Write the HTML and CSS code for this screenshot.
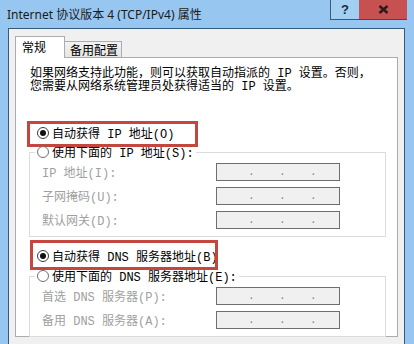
FILE: index.html
```html
<!DOCTYPE html>
<html>
<head>
<meta charset="utf-8">
<link rel="stylesheet" href="styles.css">
</head>
<body>
<div class="titlebar">
  <div class="title">Internet 协议版本 4 (TCP/IPv4) 属性</div>
  <div class="btn help">?</div>
  <div class="btn close"><svg width="11" height="9" viewBox="0 0 11 9"><path d="M1.5 1 L9.5 8 M9.5 1 L1.5 8" stroke="#2a1c1c" stroke-width="2.4" fill="none"/></svg></div>
</div>
<div class="frame">
  <div class="tabs">
    <div class="tab active">常规</div>
    <div class="tab">备用配置</div>
  </div>
  <div class="page">
    <p class="intro">如果网络支持此功能，则可以获取自动指派的 IP 设置。否则，<br>您需要从网络系统管理员处获得适当的 IP 设置。</p>

    <div class="opt first"><span class="radio on"></span>自动获得 IP 地址(O)<span class="mark m1"></span></div>
    <div class="group g1">
      <div class="legend"><span class="radio"></span>使用下面的 IP 地址(S):</div>
      <div class="fields">
        <span class="lbl">IP 地址(I):</span>
        <span class="ipbox"><i class="o"></i><i class="d">.</i><i class="o"></i><i class="d">.</i><i class="o"></i><i class="d">.</i></span>
        <span class="lbl">子网掩码(U):</span>
        <span class="ipbox"><i class="o"></i><i class="d">.</i><i class="o"></i><i class="d">.</i><i class="o"></i><i class="d">.</i></span>
        <span class="lbl">默认网关(D):</span>
        <span class="ipbox"><i class="o"></i><i class="d">.</i><i class="o"></i><i class="d">.</i><i class="o"></i><i class="d">.</i></span>
      </div>
    </div>

    <div class="opt second"><span class="radio on"></span>自动获得 DNS 服务器地址(B)<span class="mark m2"></span></div>
    <div class="group g2">
      <div class="legend"><span class="radio"></span>使用下面的 DNS 服务器地址(E):</div>
      <div class="fields">
        <span class="lbl">首选 DNS 服务器(P):</span>
        <span class="ipbox"><i class="o"></i><i class="d">.</i><i class="o"></i><i class="d">.</i><i class="o"></i><i class="d">.</i></span>
        <span class="lbl">备用 DNS 服务器(A):</span>
        <span class="ipbox"><i class="o"></i><i class="d">.</i><i class="o"></i><i class="d">.</i><i class="o"></i><i class="d">.</i></span>
      </div>
    </div>
  </div>
</div>
</body>
</html>
```

FILE: styles.css
```css
html, body {
  margin: 0;
  padding: 0;
}
body {
  width: 414px;
  height: 344px;
  overflow: hidden;
  background: #97c7f0;
  font-family: "Liberation Mono", "Noto Sans CJK SC", monospace;
  font-size: 12px;
  color: #000;
}

.titlebar {
  display: flex;
  height: 28px;
}
.title {
  flex: 1;
  font-family: "Noto Sans", "Noto Sans CJK SC", sans-serif;
  font-size: 12px;
  line-height: 18px;
  padding: 6px 0 0 7px;
  color: #1b1b1b;
  white-space: nowrap;
}
.btn {
  height: 20px;
  box-sizing: border-box;
  display: flex;
  align-items: center;
  justify-content: center;
}
.help {
  width: 29px;
  border-left: 1px solid #3a5a78;
  border-bottom: 1px solid #3a5a78;
  background: #a3cff2;
  font-family: "Liberation Sans", sans-serif;
  font-weight: bold;
  font-size: 13px;
  color: #1d2b3b;
}
.close {
  width: 48px;
  background: #c75050;
  border-bottom: 1px solid #6a3a3a;
  margin-right: 7px;
}

.frame {
  margin: 0 9px 0 8px;
  height: 316px;
  box-sizing: border-box;
  border: 1px solid #335a7d;
  border-bottom: none;
  background: #f0f0f0;
  padding: 7px 6px 0 6px;
}

.tabs {
  display: flex;
  align-items: flex-start;
  height: 21px;
}
.tab {
  font-family: "Noto Sans CJK SC", sans-serif;
  font-size: 12px;
  box-sizing: border-box;
  color: #000;
}
.tab.active {
  position: relative;
  z-index: 1;
  width: 50px;
  height: 22px;
  background: #fff;
  border: 1px solid #acacac;
  border-bottom: none;
  padding-left: 6px;
  line-height: 20px;
}
.tab:not(.active) {
  margin-top: 5px;
  width: 57px;
  height: 16px;
  background: linear-gradient(#f2f2f2, #e5e5e5);
  border: 1px solid #acacac;
  border-left: none;
  border-bottom: none;
  padding-left: 5px;
  line-height: 15px;
}

.page {
  height: 280px;
  box-sizing: border-box;
  border: 1px solid #acacac;
  background: #fff;
  padding: 10px 11px 0 14px;
}

.intro {
  margin: 0;
  line-height: 13px;
  white-space: nowrap;
}

.opt {
  position: relative;
  display: flex;
  align-items: center;
  height: 18px;
  padding-left: 7px;
  white-space: nowrap;
}
.opt.first { margin-top: 30px; }
.opt.second { margin-top: 10px; }

.radio {
  position: relative;
  width: 12px;
  height: 12px;
  box-sizing: border-box;
  border: 1px solid #3c3c3c;
  border-radius: 50%;
  background: #fff;
  margin-right: 3px;
  flex: none;
}
.radio.on::after {
  content: "";
  position: absolute;
  left: 2px;
  top: 2px;
  width: 6px;
  height: 6px;
  border-radius: 50%;
  background: #111;
}
.legend .radio {
  border-color: #707070;
}

.mark {
  position: absolute;
  box-sizing: border-box;
  border: 3px solid #c4473f;
}
.m1 { left: -3px; top: -3px; width: 171px; height: 26px; }
.m2 { left: 0; top: -7px; width: 188px; height: 30px; }

.group {
  margin-left: -1px;
  border: 1px solid #dcdcdc;
  padding: 0 0 7px 12px;
}
.g1 { margin-top: 10px; }
.g2 { margin-top: 11px; }

.legend {
  display: flex;
  align-items: center;
  width: max-content;
  height: 18px;
  margin: -10px 0 0 -7px;
  padding: 0 2px;
  background: #fff;
  white-space: nowrap;
}

.fields {
  display: grid;
  grid-template-columns: 174px 124px;
  grid-auto-rows: 18px;
  row-gap: 6px;
  margin-top: 2px;
  align-items: center;
}
.lbl {
  color: #a0a0a0;
  white-space: nowrap;
}
.ipbox {
  display: flex;
  width: 124px;
  height: 18px;
  box-sizing: border-box;
  border: 1px solid #6e6e6e;
  background: #f0f0f0;
  padding-left: 4px;
}
.ipbox i {
  font-style: normal;
  display: block;
}
.ipbox .o { width: 27px; }
.ipbox .d {
  width: 4px;
  text-align: center;
  font-size: 11px;
  line-height: 16px;
  color: #808080;
}
```
